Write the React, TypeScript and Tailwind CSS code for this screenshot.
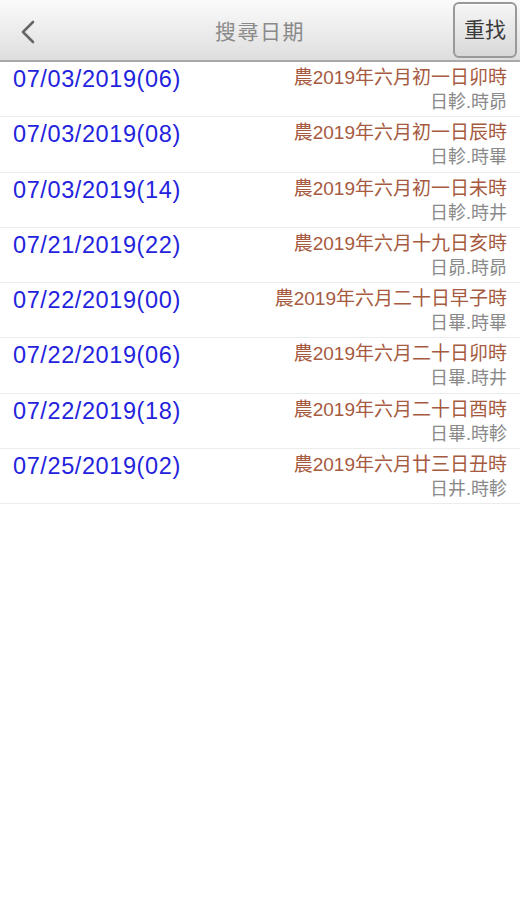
import React from "react";

const rows = [
  { d: "07/03/2019(06)", l: "農2019年六月初一日卯時", s: "日軫.時昴" },
  { d: "07/03/2019(08)", l: "農2019年六月初一日辰時", s: "日軫.時畢" },
  { d: "07/03/2019(14)", l: "農2019年六月初一日未時", s: "日軫.時井" },
  { d: "07/21/2019(22)", l: "農2019年六月十九日亥時", s: "日昴.時昴" },
  { d: "07/22/2019(00)", l: "農2019年六月二十日早子時", s: "日畢.時畢" },
  { d: "07/22/2019(06)", l: "農2019年六月二十日卯時", s: "日畢.時井" },
  { d: "07/22/2019(18)", l: "農2019年六月二十日酉時", s: "日畢.時軫" },
  { d: "07/25/2019(02)", l: "農2019年六月廿三日丑時", s: "日井.時軫" },
];

export default function App() {
  return (
    <div
      className="w-[520px] h-[900px] bg-white overflow-hidden"
      style={{ fontFamily: '"Liberation Sans", "Noto Sans CJK TC", sans-serif' }}
    >
      <div className="relative h-[62px] flex items-center justify-center bg-gradient-to-b from-[#fbfbfb] to-[#dedede] border-b-2 border-[#a9a9a9]">
        <svg className="absolute left-[18px] top-[19px]" width="20" height="26" viewBox="0 0 20 26">
          <path d="M15 3 L5 13 L15 23" fill="none" stroke="#666" strokeWidth="2.6" strokeLinecap="round" strokeLinejoin="round" />
        </svg>
        <div className="text-[21px] text-[#8a8a8a] tracking-[1.5px] pt-[3px]">搜尋日期</div>
        <div className="absolute right-[3px] top-[2px] w-[64px] h-[56px] rounded-[6px] border-2 border-[#999] bg-gradient-to-b from-[#f6f6f6] to-[#d8d8d8] flex items-center justify-center shadow-[inset_0_1px_0_#fff]">
          <span className="text-[21px] text-[#3a3a3a]">重找</span>
        </div>
      </div>
      <div>
        {rows.map((r, i) => (
          <div key={i} className="h-[55.3px] box-border border-b border-[#ececec] flex justify-between pl-[13px] pr-[13px]">
            <div className="text-[23.5px] leading-none tracking-[0.6px] text-[#2323dd] pt-[6px]">{r.d}</div>
            <div className="flex flex-col items-end pt-[3px]">
              <div className="text-[19px] leading-[25px] text-[#a65a40]">{r.l}</div>
              <div className="text-[18px] leading-[25px] text-[#8a8a8a]">{r.s}</div>
            </div>
          </div>
        ))}
      </div>
    </div>
  );
}
